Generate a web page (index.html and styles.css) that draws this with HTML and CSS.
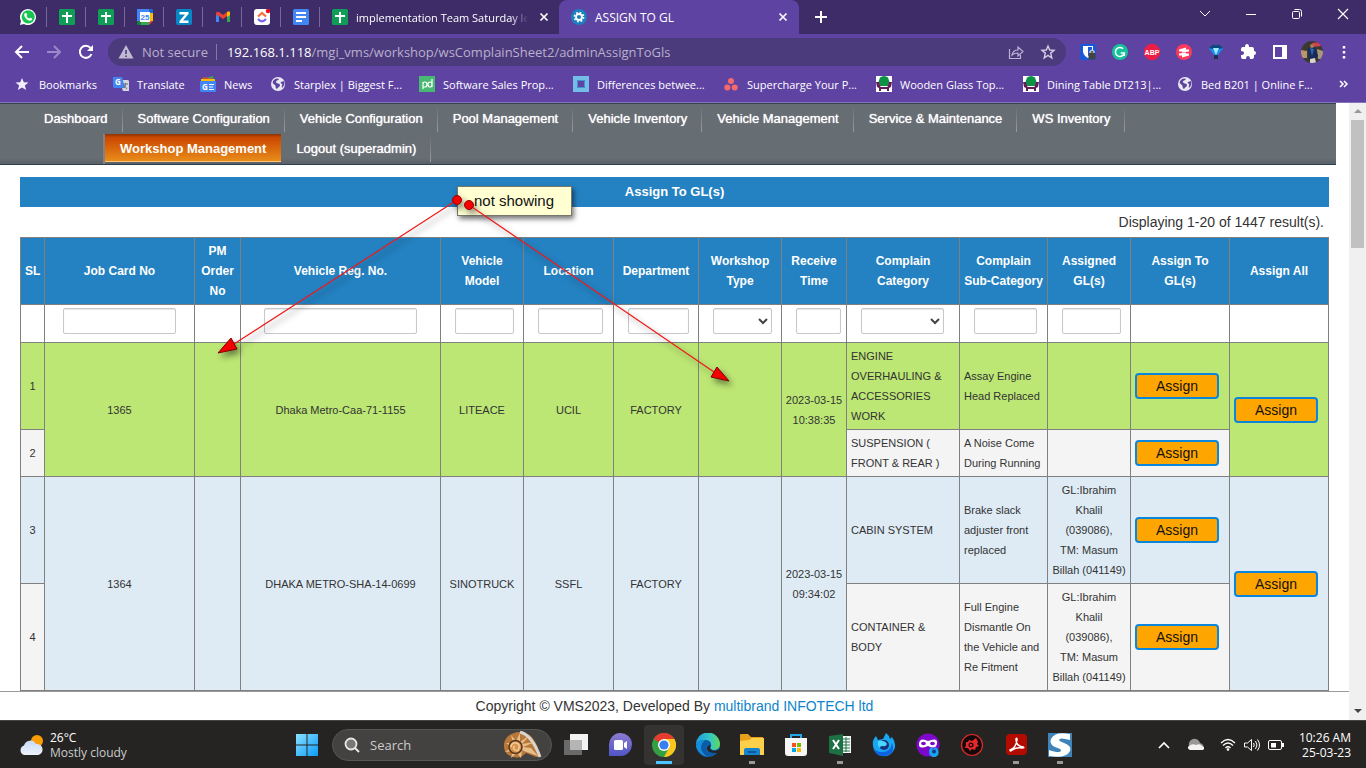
FILE: index.html
```html
<!DOCTYPE html>
<html lang="en">
<head>
<meta charset="utf-8">
<title>ASSIGN TO GL</title>
<link rel="stylesheet" href="styles.css">
</head>
<body>
<svg class="defs" aria-hidden="true">
  <symbol id="sheets" viewBox="0 0 16 16"><rect width="16" height="16" rx="1.5" fill="#0f9d58"/><path d="M7 3h2v3h4v2H9v6H7V8H3V6h4z" fill="#fff"/></symbol>
  <symbol id="close" viewBox="0 0 16 16"><path d="M4.5 4.5l7 7m0-7l-7 7" stroke="#fff" stroke-width="1.7"/></symbol>
  <symbol id="globe" viewBox="0 0 16 16"><circle cx="8" cy="8" r="7" fill="#e8e8f0"/><path d="M3 5c2-3 5-3 6-2-1 2-3 1-3 3s4 1 4 3-2 2-3 4c-2-1-1-3-2-4S2 8 3 5zM11 6l3-1c1 3 0 5-2 7-1-2 1-3 0-4s-2-1-1-2z" fill="#5e43a3"/></symbol>
  <symbol id="chair" viewBox="0 0 16 16"><path d="M0 0h16v16H0z" fill="#fff"/><path d="M4 1.500q4-3 8 0l1.500 4.500L12 10H4L2.500 6z" fill="#0b9245"/><path d="M0 6h3l1.500 5h7L13 6h3l-1 5-2 1v3h-2v-2H5v2H3v-3l-2-1z" fill="#661c58"/></symbol>
</svg>

<header class="browser">
  <div class="tabstrip">
    <button class="pin" aria-label="WhatsApp"><svg viewBox="0 0 16 16"><path d="M0 16l1-4A8 8 0 1 1 4 15z" fill="#fff"/><circle cx="8.2" cy="7.8" r="6.6" fill="#18c452"/><path d="M5 4l1.300 0 1 2-.8 1q1 2 2.700 2.600l1-.9 2 1q0 2-2.200 2Q6 11 4.300 7q-.5-2 .7-3z" fill="#fff"/></svg></button>
    <button class="pin" aria-label="Sheet one"><svg><use href="#sheets"/></svg></button>
    <button class="pin" aria-label="Sheet two"><svg><use href="#sheets"/></svg></button>
    <button class="pin" aria-label="Calendar"><svg viewBox="0 0 16 16"><path d="M0 0h12v4H0z" fill="#4285f4"/><path d="M0 4h4v8H0z" fill="#4285f4"/><path d="M12 0h3l1 1v3h-4z" fill="#1967d2"/><path d="M12 4h4v8h-4z" fill="#fbbc04"/><path d="M4 12h8v4H4z" fill="#34a853"/><path d="M0 12h4v4H1l-1-1z" fill="#188038"/><path d="M12 12h4l-4 4z" fill="#ea4335"/><path d="M3 3h10v10H3z" fill="#fff"/><text x="8" y="11" font-size="8" font-weight="700" text-anchor="middle" fill="#4285f4">25</text></svg></button>
    <button class="pin" aria-label="Zoho"><svg viewBox="0 0 16 16"><rect width="16" height="16" rx="2" fill="#0788c4"/><path d="M3.500 3h9v2L7 11.500h5.500V14H3.500v-2L9 5.500H3.500z" fill="#fff"/></svg></button>
    <button class="pin" aria-label="Gmail"><svg viewBox="0 0 16 16"><path d="M1 4v9h3V7z" fill="#4285f4"/><path d="M15 4v9h-3V7z" fill="#34a853"/><path d="M1 4q1-2 3-1l4 3 4-3v4l-4 3-4-3-3-1z" fill="#ea4335"/><path d="M12 3q3-2 3 1v2l-3 2z" fill="#fbbc04"/></svg></button>
    <button class="pin" aria-label="ClickUp"><svg viewBox="0 0 16 16"><rect width="16" height="16" rx="3" fill="#fff"/><path d="M4 7.500L8 4l4 3.500" stroke="#fb6f3c" stroke-width="2.300" fill="none"/><path d="M4 10q4 4.500 8 0" stroke="#7b68ee" stroke-width="2.300" fill="none"/><circle cx="14" cy="2" r="2.200" fill="#e90f1e"/></svg></button>
    <button class="pin" aria-label="Document"><svg viewBox="0 0 16 16"><rect width="16" height="16" rx="1.500" fill="#4285f4"/><path d="M3 4h10M3 8h10M3 12h6" stroke="#fff" stroke-width="2"/></svg></button>
    <div class="tab"><svg class="ico"><use href="#sheets"/></svg><span class="tab-name fade">implementation Team Saturday le</span><button aria-label="Close tab"><svg class="ico"><use href="#close"/></svg></button></div>
    <div class="tab active"><svg class="ico" viewBox="0 0 16 16"><circle cx="8" cy="8" r="8" fill="#1c7fc0"/><circle cx="8" cy="8" r="3" fill="none" stroke="#fff" stroke-width="1.800"/><circle cx="8" cy="8" r="4.600" fill="none" stroke="#fff" stroke-width="1.600" stroke-dasharray="1.800 1.813"/></svg><span class="tab-name">ASSIGN TO GL</span><button aria-label="Close tab"><svg class="ico"><use href="#close"/></svg></button></div>
    <button class="newtab" aria-label="New tab"><svg class="ico" viewBox="0 0 16 16"><path d="M8 2v12M2 8h12" stroke="#fff" stroke-width="2"/></svg></button>
    <div class="window-buttons">
      <button aria-label="Search tabs"><svg class="ico" viewBox="0 0 16 16"><path d="M3 5l5 5 5-5" stroke="#fff" fill="none"/></svg></button>
      <button aria-label="Minimize"><svg class="ico" viewBox="0 0 16 16"><path d="M3 8.500h10" stroke="#fff"/></svg></button>
      <button aria-label="Restore"><svg class="ico" viewBox="0 0 16 16"><rect x="3.500" y="5.500" width="7" height="7" rx="1" stroke="#fff" fill="none"/><path d="M5.500 3.500h5q2 0 2 2v5" stroke="#fff" fill="none"/></svg></button>
      <button aria-label="Close"><svg class="ico" viewBox="0 0 16 16"><path d="M3 3l10 10M13 3L3 13" stroke="#fff" stroke-width="1.200"/></svg></button>
    </div>
  </div>

  <div class="toolbar">
    <div class="nav-buttons">
      <button aria-label="Back"><svg class="ico" viewBox="0 0 16 16"><path d="M15 8H2m6-6L2 8l6 6" stroke="#fff" stroke-width="2" fill="none"/></svg></button>
      <button aria-label="Forward"><svg class="ico" viewBox="0 0 16 16"><path d="M1 8h13M8 2l6 6-6 6" stroke="#9c88cb" stroke-width="2" fill="none"/></svg></button>
      <button aria-label="Reload"><svg class="ico" viewBox="0 0 16 16"><path d="M13.500 10A6 6 0 1 1 12.500 4" stroke="#fff" stroke-width="2" fill="none"/><path d="M15 1v6H9z" fill="#fff"/></svg></button>
    </div>
    <div class="omnibox">
      <svg class="ico" viewBox="0 0 16 16"><path d="M8 1l7.500 13.500H.5z" fill="#c0b9d2"/><path d="M8 6v4m0 1.500V13" stroke="#4b3a7c" stroke-width="1.600"/></svg>
      <span class="insecure">Not secure</span>
      <span class="url"><b>192.168.1.118</b>/mgi_vms/workshop/wsComplainSheet2/adminAssignToGls</span>
      <button aria-label="Share"><svg class="ico" viewBox="0 0 16 16"><path d="M1.500 5v9.500h11V11M4 11q1-5 6-5V3l5 4.500-5 4.500V9q-4 0-6 2z" stroke="#bdb3d4" stroke-width="1.200" fill="none"/></svg></button>
      <button aria-label="Bookmark"><svg class="ico" viewBox="0 0 16 16"><path d="M8 2l1.700 4 4.300.3-3.300 2.800L11.800 14 8 11.400 4.200 14l1.100-4.900L2 6.300 6.300 6z" stroke="#d5cee6" stroke-width="1.400" fill="none"/></svg></button>
    </div>
    <div class="extensions">
      <button aria-label="Bitwarden"><svg class="ico" viewBox="0 0 16 16"><rect width="16" height="16" rx="2" fill="#1759d8"/><path d="M3 2h10v6q-1 4-5 6-4-2-5-6z" fill="#fff"/><path d="M8 3h4v5q-1 3-4 4z" fill="#1759d8"/><rect x="8.500" y="9" width="7" height="6.500" rx="1" fill="#444"/><path d="M10 9V7.500q2-3 4 0V9" stroke="#ddd" stroke-width="1.200" fill="#666"/></svg></button>
      <button aria-label="Grammarly"><svg class="ico" viewBox="0 0 16 16"><circle cx="8" cy="8" r="8" fill="#15c39a"/><path d="M11 4.700A4.500 4.500 0 1 0 12.300 9H8.700m3.600 0v3" stroke="#fff" stroke-width="1.500" fill="none"/></svg></button>
      <button aria-label="Adblock Plus"><svg class="ico" viewBox="0 0 16 16"><path d="M5 0h6l5 5v6l-5 5H5l-5-5V5z" fill="#ed1e45"/><text x="8" y="10.500" font-size="7" font-weight="700" text-anchor="middle" fill="#fff">ABP</text></svg></button>
      <button aria-label="Recorder"><svg class="ico" viewBox="0 0 16 16"><circle cx="8" cy="8" r="8" fill="#f93a5b"/><path d="M3 5.500l7-2v2h3v2l-7 1v-1H3zM3 9.500l7-1v1h3v2l-7 2v-2H3z" fill="#fff"/></svg></button>
      <button aria-label="Diamond"><svg class="ico" viewBox="0 0 16 16"><path d="M1 4l3-3h8l3 3-5 7v4H6v-4z" fill="#1594e9"/><path d="M1 4l3-3h8l3 3-4 1H5z" fill="#0c477d"/><path d="M5 4h6l-3 7z" fill="#a8e6ff"/><path d="M6 11h4v4H6z" fill="#17324f"/></svg></button>
      <button aria-label="Extensions"><svg class="ico" viewBox="0 0 16 16"><path d="M1 5q0-2 2-2h2q0-3 2-3t2 3h3q2 0 2 2v2q2 0 2 2t-2 2v2q0 2-2 2h-2q0-3-2-3t-2 3H3q-2 0-2-2v-2q3 0 3-2t-3-2z" fill="#fff"/></svg></button>
      <button aria-label="Side panel"><svg class="ico" viewBox="0 0 16 16"><path d="M2 2h12v12H2z" stroke="#fff" stroke-width="2" fill="none"/><path d="M10 2h4v12h-4z" fill="#fff"/></svg></button>
      <button aria-label="Profile"><svg class="avatar" viewBox="0 0 22 22"><clipPath id="av"><circle cx="11" cy="11" r="11"/></clipPath><g clip-path="url(#av)"><path d="M0 0h22v22H0z" fill="#3c3a30"/><path d="M0 9l6 1v7H0z" fill="#b99572"/><path d="M16 8l6 2v8h-5z" fill="#aa967c"/><path d="M11 2l8-1 1 4-8 1z" fill="#d04050"/><path d="M7 7l7-1 3 9-3 4H8z" fill="#172d58"/><path d="M9 7l4 1-2 7z" fill="#2c66bb"/><path d="M9 18l5-1 1 5H9z" fill="#dcd4c8"/><circle cx="11" cy="5" r="2" fill="#a97a5b"/></g></svg></button>
      <button aria-label="Menu"><svg class="ico" viewBox="0 0 16 16"><path d="M8 2v2.500M8 7v2.500M8 12v2.500" stroke="#fff" stroke-width="2.500"/></svg></button>
    </div>
  </div>

  <nav class="bookmarks">
    <a href="#"><svg class="ico" viewBox="0 0 16 16"><path d="M7 2l1.800 4.300 4.700.2-3.700 3 1.400 4.500L7 11.500 2.800 14l1.400-4.500-3.700-3 4.700-.2z" fill="#f2effa"/></svg>Bookmarks</a>
    <a href="#"><svg class="ico" viewBox="0 0 16 16"><path d="M6 4h9l1 1v10l-6 0z" fill="#d2d6df"/><path d="M0 1h9l3 11H1l-1-1z" fill="#4285f4"/><text x="5" y="9" font-size="8" font-weight="700" text-anchor="middle" fill="#fff">G</text><path d="M10 8h5M12.500 7v1q0 3-2.500 4m1-3l3 4" stroke="#69717b" fill="none"/></svg>Translate</a>
    <a href="#"><svg class="ico" viewBox="0 0 16 16"><path d="M1 3l12-3 1 5H1z" fill="#34a853"/><path d="M3 1l11 2v4H3z" fill="#ea4335"/><path d="M1 3h14v5H1z" fill="#fbbc04"/><rect y="5" width="16" height="11" rx="1" fill="#4285f4"/><text x="5" y="13.500" font-size="8" font-weight="700" text-anchor="middle" fill="#fff">G</text><path d="M9 8.500h5M9 11h4M9 13.500h5" stroke="#fff"/></svg>News</a>
    <a href="#"><svg class="ico"><use href="#globe"/></svg>Starplex | Biggest F...</a>
    <a href="#"><svg class="ico" viewBox="0 0 16 16"><path d="M0 0h16v16H0z" fill="#47b972"/><path d="M4 13V6m0 2q0-2 2-2t2 2.500-2 2.500H4M13 3v8m0-2.500q0 2.500-2 2.500T9 8.500 11 6t2 2" stroke="#fff" stroke-width="1.200" fill="none"/></svg>Software Sales Prop...</a>
    <a href="#"><svg class="ico" viewBox="0 0 16 16"><path d="M2 2h12v12H2z" stroke="#73bde6" stroke-width="4" fill="none"/><path d="M4.500 4.500h7v7h-7z" stroke="#4a8fd0" fill="none"/></svg>Differences betwee...</a>
    <a href="#"><svg class="ico" viewBox="0 0 16 16"><g fill="#f8696c"><circle cx="8" cy="5" r="3"/><circle cx="4.300" cy="11.500" r="3"/><circle cx="11.700" cy="11.500" r="3"/></g></svg>Supercharge Your P...</a>
    <a href="#"><svg class="ico"><use href="#chair"/></svg>Wooden Glass Top...</a>
    <a href="#"><svg class="ico"><use href="#chair"/></svg>Dining Table DT213|...</a>
    <a href="#"><svg class="ico"><use href="#globe"/></svg>Bed B201 | Online F...</a>
    <button aria-label="More bookmarks"><svg class="ico" viewBox="0 0 16 16"><path d="M2 5l3 3-3 3M6 5l3 3-3 3" stroke="#fff" stroke-width="1.500" fill="none"/></svg></button>
  </nav>
</header>

<div class="viewport">
  <div class="page">
    <main class="content">
      <nav class="menu">
        <ul>
          <li><a href="#">Dashboard</a></li><li><a href="#">Software Configuration</a></li><li><a href="#">Vehicle Configuration</a></li><li><a href="#">Pool Management</a></li><li><a href="#">Vehicle Inventory</a></li><li><a href="#">Vehicle Management</a></li><li><a href="#">Service &amp; Maintenance</a></li><li><a href="#">WS Inventory</a></li>
        </ul>
        <ul class="second">
          <li class="current"><a href="#">Workshop Management</a></li><li><a href="#">Logout (superadmin)</a></li>
        </ul>
      </nav>
      <h1 class="title">Assign To GL(s)</h1>
      <section class="grid">
        <p class="summary">Displaying 1-20 of 1447 result(s).</p>
        <table>
          <colgroup><col class="c-sl"><col class="c-job"><col class="c-pm"><col class="c-reg"><col class="c-model"><col class="c-loc"><col class="c-dep"><col class="c-type"><col class="c-time"><col class="c-cat"><col class="c-sub"><col class="c-gl"><col class="c-act"><col class="c-act"></colgroup>
          <thead>
            <tr><th>SL</th><th>Job Card No</th><th>PM Order No</th><th>Vehicle Reg. No.</th><th>Vehicle Model</th><th>Location</th><th>Department</th><th>Workshop Type</th><th>Receive Time</th><th>Complain Category</th><th>Complain Sub-Category</th><th>Assigned GL(s)</th><th>Assign To GL(s)</th><th>Assign All</th></tr>
            <tr class="filters">
              <td></td>
              <td><input class="wide" type="text" aria-label="Job Card No"></td>
              <td></td>
              <td><input class="wide" type="text" aria-label="Vehicle Reg. No."></td>
              <td><input type="text" aria-label="Vehicle Model"></td>
              <td><input type="text" aria-label="Location"></td>
              <td><input type="text" aria-label="Department"></td>
              <td><select aria-label="Workshop Type"><option></option></select></td>
              <td><input type="text" aria-label="Receive Time"></td>
              <td><select aria-label="Complain Category"><option></option></select></td>
              <td><input type="text" aria-label="Complain Sub-Category"></td>
              <td><input type="text" aria-label="Assigned GL(s)"></td>
              <td></td><td></td>
            </tr>
          </thead>
          <tbody>
            <tr class="green"><td>1</td><td rowspan="2">1365</td><td rowspan="2"></td><td rowspan="2">Dhaka Metro-Caa-71-1155</td><td rowspan="2">LITEACE</td><td rowspan="2">UCIL</td><td rowspan="2">FACTORY</td><td rowspan="2"></td><td class="time" rowspan="2">2023-03-15 10:38:35</td><td class="left">ENGINE OVERHAULING &amp; ACCESSORIES WORK</td><td class="left">Assay Engine Head Replaced</td><td></td><td class="left"><button class="assign">Assign</button></td><td class="left" rowspan="2"><button class="assign">Assign</button></td></tr>
            <tr class="pale"><td>2</td><td class="left">SUSPENSION ( FRONT &amp; REAR )</td><td class="left">A Noise Come During Running</td><td></td><td class="left"><button class="assign">Assign</button></td></tr>
            <tr class="blue"><td>3</td><td rowspan="2">1364</td><td rowspan="2"></td><td rowspan="2">DHAKA METRO-SHA-14-0699</td><td rowspan="2">SINOTRUCK</td><td rowspan="2">SSFL</td><td rowspan="2">FACTORY</td><td rowspan="2"></td><td class="time" rowspan="2">2023-03-15 09:34:02</td><td class="left">CABIN SYSTEM</td><td class="left">Brake slack adjuster front replaced</td><td>GL:Ibrahim Khalil (039086),<br>TM: Masum Billah (041149)</td><td class="left"><button class="assign">Assign</button></td><td class="left" rowspan="2"><button class="assign">Assign</button></td></tr>
            <tr class="pale"><td>4</td><td class="left">CONTAINER &amp; BODY</td><td class="left">Full Engine Dismantle On the Vehicle and Re Fitment</td><td>GL:Ibrahim Khalil (039086),<br>TM: Masum Billah (041149)</td><td class="left"><button class="assign">Assign</button></td></tr>
          </tbody>
        </table>
      </section>
    </main>
    <footer class="footer">Copyright © VMS2023, Developed By <a href="#">multibrand INFOTECH ltd</a></footer>
  </div>
  <div class="scrollbar" aria-hidden="true"><i class="up"></i><i class="thumb"></i><i class="down"></i></div>

  <div class="note">not showing</div>
  <svg class="arrows" viewBox="0 0 740 300" aria-hidden="true">
    <g stroke="#f01818" stroke-width="1.200"><path d="M457 97L234 241"/><path d="M469 102L714 269"/></g>
    <g fill="#f50000" stroke="#7a0000"><path d="M218 250l13-15 6 11z"/><path d="M729 278l-12-14-6 10z"/></g>
    <g fill="#f50000" stroke="#900"><circle cx="457" cy="97" r="4.500"/><circle cx="469" cy="102" r="4.500"/></g>
  </svg>
</div>

<footer class="taskbar">
  <button class="weather"><svg viewBox="0 0 26 22"><defs><linearGradient id="cl" x2="0" y2="1"><stop stop-color="#c8daf8"/><stop offset="1" stop-color="#eef3fb"/></linearGradient></defs><circle cx="19" cy="7" r="6" fill="#fb9d05"/><path d="M6 21a5 5 0 0 1 0-9.500A6.500 6.500 0 0 1 18 10a5.500 5.500 0 1 1 2 11z" fill="url(#cl)"/></svg><span>26°C<small>Mostly cloudy</small></span></button>
  <div class="dock">
    <button aria-label="Start"><svg viewBox="0 0 24 24"><defs><linearGradient id="win" x2="1" y2="1"><stop stop-color="#8be0fd"/><stop offset="1" stop-color="#0a9bfa"/></linearGradient></defs><path d="M1 1h10.500v10.500H1zM12.500 1H23v10.500H12.500zM1 12.500h10.500V23H1zM12.500 12.500H23V23H12.500z" fill="url(#win)"/></svg></button>
    <label class="search"><svg class="ico" viewBox="0 0 16 16"><circle cx="7" cy="7" r="5.500" stroke="#e8e8e8" stroke-width="1.800" fill="#777"/><path d="M11 11l4 4" stroke="#e8e8e8" stroke-width="2"/></svg><input type="text" placeholder="Search" aria-label="Search"><svg class="shell" viewBox="0 0 40 28"><path d="M1 16C0 7 8 1 17 1c10 0 16 7 21 25l-5 0-10-4-5 4q-8 2-14-3-3-3-3-7z" fill="#b97738"/><path d="M21 20l14 5-7-8-8-1 12-5-13 2 8-9-10 7 0-9-4 8-5-6 2 8-7 0 6 4-7 5 8-1-2 7 6-5 4 5 1-8z" fill="#e7bf8c"/><path d="M17 1q12 3 20 25" stroke="#d8d4ce" stroke-width="3" fill="none"/><circle cx="12.500" cy="16" r="6.500" fill="#d9924b" stroke="#59351b" stroke-width="1.500"/><path d="M8 16q1-5 5-4t3 5-4 2 0-4" stroke="#f0cd9d" stroke-width="1.500" fill="none"/></svg></label>
    <button aria-label="Task view"><svg viewBox="0 0 24 24"><path d="M6 1h18v16H6z" fill="#f3f3f3"/><path d="M0 7h18v15H0z" fill="#777" opacity=".85"/><path d="M6 7h12v10H6z" fill="#b5b5b5"/></svg></button>
    <button aria-label="Chat"><svg viewBox="0 0 24 24"><defs><linearGradient id="chat" x2="0" y2="1"><stop stop-color="#8d7bd0"/><stop offset="1" stop-color="#4f55c5"/></linearGradient></defs><path d="M1 23V12A11.500 11.500 0 1 1 13 23z" fill="url(#chat)"/><rect x="6" y="7" width="9" height="10" rx="1.500" fill="#fff"/><path d="M16 10l3-2v8l-3-2z" fill="#fff"/></svg></button>
    <button class="on" aria-label="Chrome"><svg viewBox="0 0 24 24"><circle cx="12" cy="12" r="12" fill="#34a044"/><path d="M12 12L1.600 6A12 12 0 0 1 22.400 6z" fill="#e63c30"/><path d="M22.400 6A12 12 0 0 1 12 24l5-9-5-9z" fill="#fcc71a"/><circle cx="12" cy="12" r="6" fill="#fff"/><circle cx="12" cy="12" r="4.600" fill="#3880f0"/></svg></button>
    <button aria-label="Edge"><svg viewBox="0 0 24 24"><defs><linearGradient id="edge" x2="1"><stop stop-color="#1d9bdc"/><stop offset=".6" stop-color="#35c8c5"/><stop offset="1" stop-color="#64d956"/></linearGradient></defs><circle cx="12" cy="12" r="12" fill="#0c5ca8"/><path d="M0 12A12 12 0 0 1 24 11q0 6-7 6-4-1-2-4 1-6-6-6-7 0-9 5z" fill="url(#edge)"/><path d="M9 7q-7 6-2 13 3 4 8 4Q4 24 0 14 0 7 9 7z" fill="#168fdb"/><path d="M15 12q-3 5 3 6 3 0 6-2v3l-4 1q-9 0-9-5 1-3 4-3z" fill="#252423"/></svg></button>
    <button class="run" aria-label="File Explorer"><svg viewBox="0 0 24 24"><path d="M0 2q0-1 1-1h7l3 3h12v8H0z" fill="#e6a019"/><path d="M0 8l9-1 3-2h12v17H0z" fill="#fdd04b"/><path d="M4 22v-5q0-2 2-2h12q2 0 2 2v5z" fill="#1583cd"/><path d="M8 19h8" stroke="#0a4d88" stroke-width="1.500"/></svg></button>
    <button aria-label="Store"><svg viewBox="0 0 24 24"><path d="M7 7V2h10v5" stroke="#25a8e8" stroke-width="2" fill="none"/><path d="M1 5h22v15q0 3-3 3H4q-3 0-3-3z" fill="#f6f6f6"/><path d="M8 10h4v4H8z" fill="#f25022"/><path d="M13 10h4v4h-4z" fill="#7fba00"/><path d="M8 15h4v4H8z" fill="#00a4ef"/><path d="M13 15h4v4h-4z" fill="#ffb900"/></svg></button>
    <button class="run" aria-label="Excel"><svg viewBox="0 0 24 24"><path d="M13 3h10v17H13z" fill="#f7f9f7"/><path d="M14 6h8M14 9h8M14 12h8M14 15h8M14 18h8M18 4v15" stroke="#217346"/><path d="M1 3l14-2v22L1 20z" fill="#1d7044"/><path d="M5 7l6 9M11 7l-6 9" stroke="#fff" stroke-width="2"/></svg></button>
    <button aria-label="Firefox"><svg viewBox="0 0 24 24"><path d="M1 13Q0 7 4 3l2 4 5-1 3-6q3 2 4 6l2-2q5 7 2 13-4 7-11 6-9-1-10-10z" fill="#18a7f2"/><path d="M1 13q2 6 9 6 9 0 10-9 3 8-2 11-9 5-14-1z" fill="#0d62e1"/><circle cx="12" cy="12" r="5" fill="#18327d"/><path d="M6 8q7-1 9 3-1 3-5 2-2 0-2 2-3-2-2-7z" fill="#49d7fb"/></svg></button>
    <button aria-label="Private browsing"><svg viewBox="0 0 24 24"><circle cx="12" cy="12" r="11.500" fill="#7d08c9"/><path d="M12 8Q4 4 3 10.500T12 13q8 4 9-2.500T12 8z" fill="#fff"/><ellipse cx="7.500" cy="10.500" rx="2.400" ry="1.700" fill="#7d08c9"/><ellipse cx="16.500" cy="10.500" rx="2.400" ry="1.700" fill="#7d08c9"/><path d="M13 19q0-4 3-5l1 2 3-2q4 4 2 8-4 4-7 1-2-1-2-4z" fill="#18a5ee"/><circle cx="18" cy="18.500" r="2" fill="#123a8e"/></svg></button>
    <button aria-label="Game tool"><svg viewBox="0 0 24 24"><circle cx="12" cy="12" r="10.500" fill="#15090a" stroke="#e42a2b" stroke-width="1.200"/><path d="M6 9l2 0 1-2 3 1 4-3 2 4-1 2 2 2-3 1-1 3-3-1-2 2-2-3-3 0 1-3z" fill="#e7282b"/><circle cx="11" cy="12" r="2.500" fill="#15090a"/><circle cx="11" cy="12" r="1.200" fill="#e7282b"/></svg></button>
    <button class="run" aria-label="Acrobat"><svg viewBox="0 0 24 24"><rect x="2" y="1" width="21" height="21" rx="4" fill="#b30b00"/><path d="M6 17q6-2 7-10 0-3-1-1 0 7 7 8 2 1-1 1-5-1-10 2-2 2-2 0z" stroke="#fff" stroke-width="1.500" fill="none"/></svg></button>
    <button class="run" aria-label="S application"><svg viewBox="0 0 24 24"><path d="M0 0h24v24H0z" fill="#3f83b8"/><path d="M22 1v6q-11-3-11 0 0 1 5 3 8 3 6 8-4 8-21 5v-6q12 4 12 0 0-1-6-3-6-3-4-8 4-8 19-5z" fill="#fff"/></svg></button>
  </div>
  <div class="tray">
    <button aria-label="Hidden icons"><svg class="ico" viewBox="0 0 16 16"><path d="M3 11l5-5 5 5" stroke="#fff" stroke-width="1.700" fill="none"/></svg></button>
    <button class="cloud" aria-label="OneDrive"><svg class="ico" viewBox="0 0 16 16"><path d="M1 9a5 5 0 0 1 11-3q4 1 4 6l-8 0z" fill="#999"/><path d="M2 13q-4-2-1-4 3-3 7-1 4-2 6 1 4 2 1 4z" fill="#f3f3f3"/></svg></button>
    <button aria-label="Network"><svg class="ico" viewBox="0 0 16 16"><path d="M1 6q7-7 14 0M3 8.500q5-5 10 0M5.500 11q2.500-2.500 5 0" stroke="#fff" stroke-width="1.300" fill="none"/><circle cx="8" cy="12.500" r="1.300" fill="#fff"/></svg></button>
    <button aria-label="Volume"><svg class="ico" viewBox="0 0 16 16"><path d="M.5 6h3l4-3.500v11L3.500 10h-3zM9.500 6q1.500 2 0 4M11.500 4q3 4 0 8M13.500 2.500q4 5.500 0 11" stroke="#fff" fill="none"/></svg></button>
    <button aria-label="Battery"><svg class="ico" viewBox="0 0 16 16"><rect x=".5" y="3.500" width="13" height="9" rx="1.500" stroke="#fff" fill="none"/><path d="M3 6h5v4.500H3zM14 6h2v4h-2z" fill="#fff"/></svg></button>
    <button class="clock">10:26 AM<br>25-03-23</button>
  </div>
</footer>
</body>
</html>
```

FILE: styles.css
```css
* { box-sizing: border-box; }
body { margin: 0; height: 100vh; display: flex; flex-direction: column; overflow: hidden; background: #fff; color: #333; font-family: "Liberation Sans", Arial, sans-serif; }
button { border: 0; padding: 0; background: none; color: inherit; font: inherit; }
button svg, .ico { display: block; flex: none; }
.ico { width: 16px; height: 16px; }
.defs { display: none; }
a { text-decoration: none; color: inherit; }

/* browser chrome */
.browser { flex: none; background: #5e43a3; color: #fff; font: 11px "Open Sans", "Noto Sans", sans-serif; border-bottom: 1px solid #8672bb; }
.tabstrip { display: flex; height: 34px; background: #3d2c68; padding-left: 8px; }
.pin { width: 39px; display: grid; place-items: center; background: linear-gradient(#76689a, #76689a) right / 1px 20px no-repeat; font-family: "Liberation Sans", sans-serif; }
.pin svg { width: 16px; height: 16px; }
.tab { display: flex; align-items: center; gap: 8px; width: 239px; padding: 0 7px 0 12px; }
.tab.active { width: 240px; padding: 0 8px 0 12px; background: #5e43a3; border-radius: 8px 8px 0 0; font-size: 12px; }
.tab-name { flex: 1; min-width: 0; white-space: nowrap; }
.fade { -webkit-mask-image: linear-gradient(90deg, #000 90%, transparent); mask-image: linear-gradient(90deg, #000 90%, transparent); }
.newtab { padding: 0 14px; }
.window-buttons { display: flex; margin-left: auto; height: 28px; }
.window-buttons button { width: 46px; display: grid; place-items: center; }
.toolbar { display: flex; align-items: center; height: 36px; }
.nav-buttons { display: flex; gap: 16px; padding: 0 14px; }
.omnibox { flex: 1; display: flex; align-items: center; gap: 16px; height: 28px; padding: 0 10px; border-radius: 14px; background: #4b3a7c; font-size: 13px; color: #b9b0cd; }
.insecure { margin-left: -8px; padding-right: 8px; border-right: 1px solid #8579a6; line-height: 16px; }
.url { flex: 1; margin-left: -6px; white-space: nowrap; }
.url b { font-weight: 400; color: #fff; }
.extensions { display: flex; align-items: center; padding: 0 6px; font-family: "Liberation Sans", sans-serif; }
.extensions button { width: 32px; display: grid; place-items: center; }
.avatar { width: 22px; height: 22px; }
.bookmarks { display: grid; grid-template-columns: 98px 87px 70px 149px 154px 150px 153px 147px 154px 1fr 28px; align-items: center; height: 32px; padding: 0 0 4px 15px; }
.bookmarks a { display: flex; align-items: center; gap: 8px; white-space: nowrap; }

/* page viewport */
.viewport { position: relative; flex: 1; min-height: 0; display: flex; }
.page { flex: 1; min-width: 0; display: flex; flex-direction: column; }
.content { flex: 1; min-height: 0; overflow: hidden; }
.menu { margin-right: 13px; background: linear-gradient(#666d73 90%, #596067); border-top: 1px solid #34424f; border-bottom: 1px solid #2c414c; font-size: 13px; color: #fff; }
.menu ul { display: flex; height: 30px; margin: 0; padding: 0 0 0 29px; list-style: none; }
.menu li { padding: 0 15px; line-height: 30px; white-space: nowrap; text-shadow: 0 0 1px #fff; background: linear-gradient(transparent, #9a9da0) right / 1px 26px no-repeat; }
.menu .second { margin-left: 103px; padding: 0; border-left: 2px solid #8a7f7c; }
.menu .current { margin-bottom: 2px; font-weight: 700; text-shadow: none; background: linear-gradient(#8a3300, #cb4700 12%, #e88c1a); border-bottom: 1px solid #ffc27a; }
.title { margin: 12px 20px 0; background: #2482c2; color: #fff; font-size: 13px; line-height: 30px; text-align: center; }
.grid { margin: 0 20px; }
.summary { margin: 0; padding-right: 5px; line-height: 30px; font-size: 14px; text-align: right; }
table { width: 100%; table-layout: fixed; border-collapse: collapse; font-size: 11px; line-height: 20px; text-align: center; }
th, td { border: 1px solid #808080; padding: 3px 4px; vertical-align: middle; }
th { background: #2482c2; color: #fff; font-size: 12px; }
.c-sl { width: 24px; } .c-job { width: 150px; } .c-pm { width: 46px; } .c-reg { width: 200px; }
.c-model, .c-type, .c-gl { width: 83px; }
.c-loc { width: 90px; } .c-dep { width: 85px; } .c-time { width: 65px; } .c-cat { width: 113px; } .c-sub { width: 88px; } .c-act { width: 99px; }
.filters input, .filters select { display: block; width: 80%; height: 26px; margin: 0 0 5px 10px; padding: 2px; background: #fff; border: 1px solid #c8c8c8; border-radius: 2px; box-shadow: inset 0 1px 1px #e8e8e8; color: #444; }
.filters .wide { margin: 0 auto 5px; }
.left { text-align: left; }
.time { padding: 3px; }
.green td { background: #bce774; }
.blue td { background: #deebf5; }
.pale td { background: #f4f4f4; }
.assign { display: block; width: 84px; height: 26px; border: 2px solid #0a86dc; border-radius: 4px; background: #ffa500; color: #111; font-size: 14px; }
.footer { flex: none; border-top: 1px solid #999; line-height: 28px; font-size: 14px; text-align: center; }
.footer a { color: #0c84cc; }
.scrollbar { width: 17px; display: flex; flex-direction: column; align-items: center; background: #f0f0f0; }
.up, .down { border: 4px solid transparent; }
.up { margin: 3px 0 7px; border-bottom: 4px solid #999; border-top-width: 3px; }
.thumb { width: 13px; height: 128px; background: #c1c1c1; }
.down { margin: auto 0 3px; border-top-color: #444; }

/* annotations drawn over the page */
.note { position: absolute; left: 457px; top: 83px; padding: 0 17px 0 16px; background: #ffffd2; border: 1px solid #77786c; box-shadow: 2px 3px 5px #0008; color: #111; font-size: 15px; line-height: 28px; }
.arrows { position: absolute; left: 0; top: 0; width: 740px; height: 300px; filter: drop-shadow(3px 4px 3px #0007); pointer-events: none; }

/* taskbar */
.taskbar { flex: none; position: relative; display: flex; align-items: center; height: 48px; background: #252423; border-top: 1px solid #454545; color: #fff; font: 12px "Open Sans", "Noto Sans", sans-serif; }
.weather { display: flex; align-items: center; gap: 6px; width: 285px; padding-left: 18px; text-align: left; line-height: 15px; }
.weather svg { width: 26px; height: 22px; }
.weather small { display: block; font-size: 12px; color: #ccc; }
.dock { display: flex; align-items: center; }
.dock button { width: 44px; height: 40px; display: grid; place-items: center; }
.dock button svg { width: 24px; height: 24px; }
.dock .on { width: 40px; margin: 0 2px; border-radius: 4px; background: linear-gradient(#4cc2ff, #4cc2ff) center bottom 1px / 16px 3px no-repeat, #343332; }
.dock .run { background: linear-gradient(#999, #999) center bottom 1px / 6px 3px no-repeat; }
.search { display: flex; align-items: center; gap: 10px; width: 220px; height: 32px; margin: 0 2px 0 3px; padding: 0 8px 0 11px; border: 1px solid #555; border-radius: 16px; background: #434241; }
.search input { flex: 1; width: 0; min-width: 0; padding: 0; border: 0; background: none; color: #ddd; font: 13px "Open Sans", "Noto Sans", sans-serif; }
.search input::placeholder { color: #ccc; opacity: 1; }
.shell { width: 40px; height: 28px; }
.tray { display: flex; align-items: center; margin-left: auto; padding-right: 15px; gap: 8px; }
.tray .cloud { margin: 0 8px; }
.clock { width: 59px; text-align: right; line-height: 15px; white-space: nowrap; }
```
